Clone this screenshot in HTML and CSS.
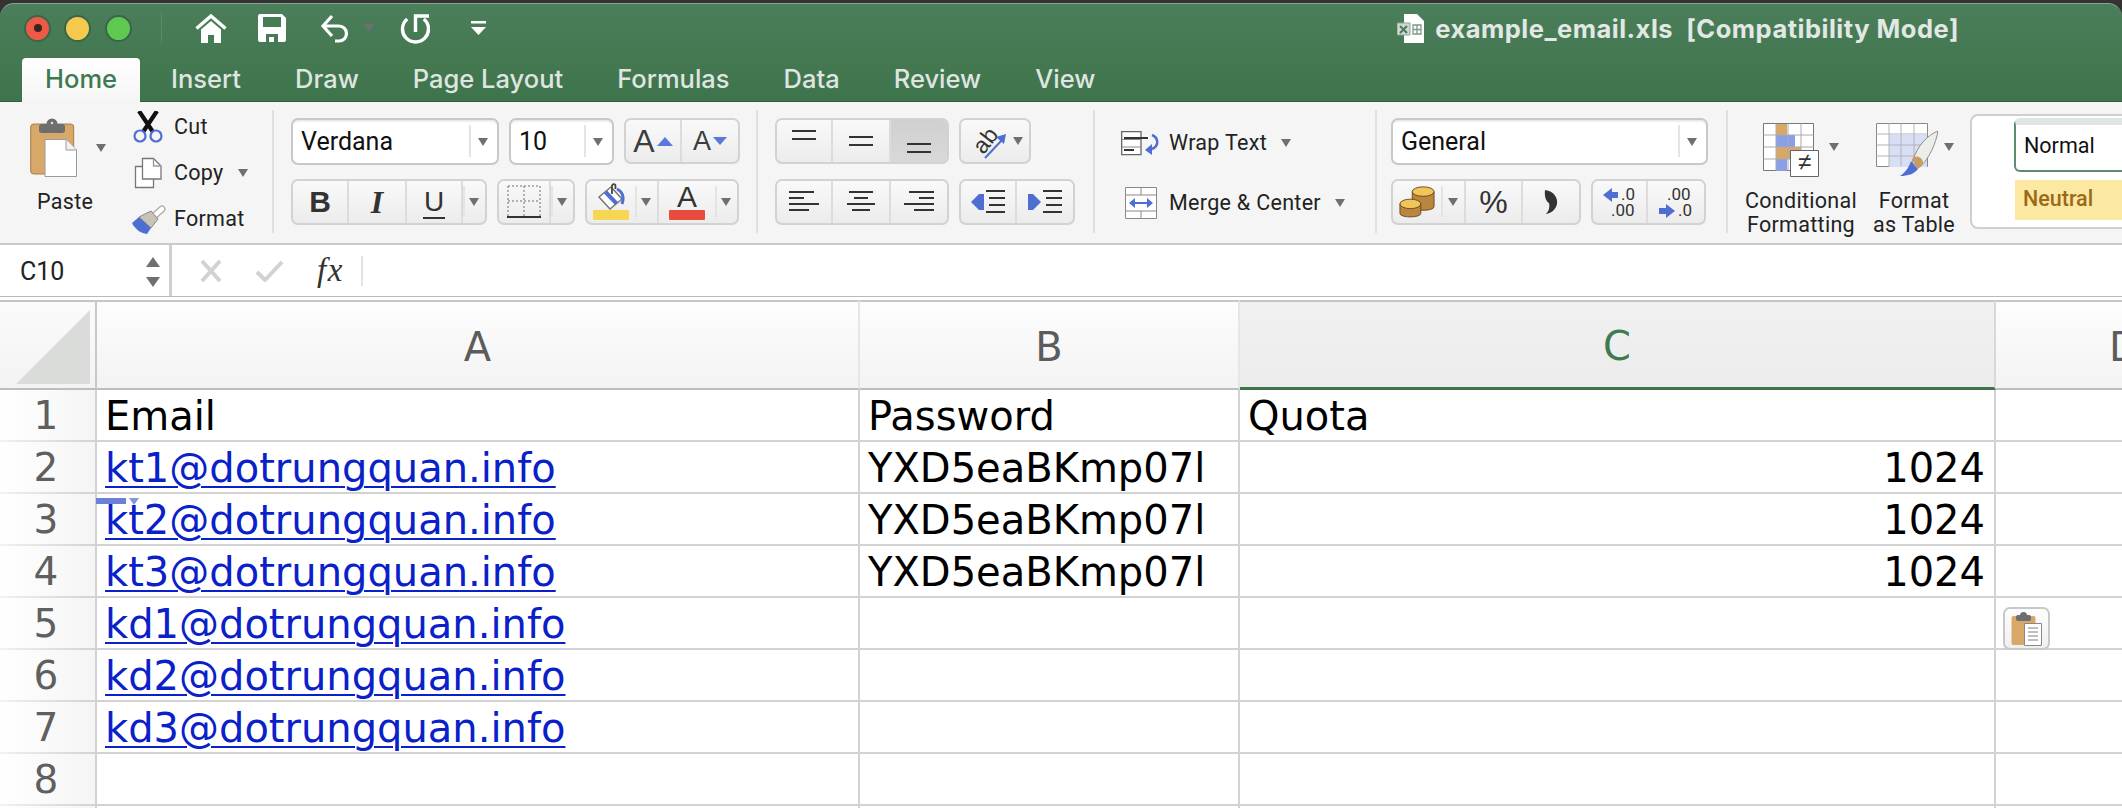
FILE: index.html
```html
<!DOCTYPE html>
<html lang="en">
<head>
<meta charset="utf-8">
<title>example_email.xls</title>
<link rel="stylesheet" href="styles.css">
</head>
<body>
<div class="window">
  <header class="titlebar">
    <div class="title-row">
      <div class="lights">
        <span class="light red"><i></i></span>
        <span class="light yellow"></span>
        <span class="light green"></span>
      </div>
      <span class="qa-sep"></span>
      <svg class="qa home" viewBox="0 0 32 29"><path d="M1.500 14.500 16 2l14.500 12.500" fill="none" stroke="#fff" stroke-width="3.400"/><path d="M6 15.500 16 7l10 8.500V29h-7v-8h-6v8H6z" fill="#fff"/></svg>
      <svg class="qa save" viewBox="0 0 28 28"><path fill="#fff" fill-rule="evenodd" d="M2 0h22l4 4v22a2 2 0 0 1-2 2H2a2 2 0 0 1-2-2V2a2 2 0 0 1 2-2zM5 3v10h18V3zM8 20v8h3v-5h5v5h4v-8z"/></svg>
      <svg class="qa undo" viewBox="0 0 30 29"><path d="M12 2 3 12l9 10M3 12h16a7.500 7.500 0 0 1 0 15h-4" fill="none" stroke="#fff" stroke-width="3.200"/></svg>
      <span class="caret qa-caret"></span>
      <svg class="qa redo" viewBox="0 0 30 31"><path d="M7.200 6A13 13 0 1 0 23.800 6M15.500 19V3H29" fill="none" stroke="#fff" stroke-width="3.400"/></svg>
      <svg class="qa more" viewBox="0 0 15 14"><path d="M0 0h15v2.500H0zM0 6h15l-7.500 8z" fill="#fff"/></svg>
      <div class="doc">
        <svg class="doc-icon" viewBox="0 0 27 29"><path d="M7 0h13l7 7v22H7z" fill="#fff"/><path d="M0 9h13v12H0z" fill="#cfd8d2" stroke="#8aa391"/><path d="m3 12 7 7m0-7-7 7" stroke="#4b7a59" stroke-width="2"/><path d="M16 11h8v9h-8zM20 11v9M16 15.500h8" fill="none" stroke="#7c9a85" stroke-width="1.300"/></svg>
        <span class="doc-title">example_email.xls  [Compatibility Mode]</span>
      </div>
    </div>
    <nav class="tabs">
      <span class="tab active">Home</span>
      <span class="tab">Insert</span>
      <span class="tab">Draw</span>
      <span class="tab">Page Layout</span>
      <span class="tab">Formulas</span>
      <span class="tab">Data</span>
      <span class="tab">Review</span>
      <span class="tab">View</span>
    </nav>
  </header>

  <section class="ribbon">
    <div class="group clip">
      <div class="paste">
        <div class="paste-top">
          <svg class="paste-icon" viewBox="0 0 47 59"><rect x=".7" y="6" width="43" height="50" rx="3" fill="#d8a868" stroke="#a87c48"/><rect x="9" y="6" width="26" height="9" rx="3" fill="#6e6e6e"/><circle cx="22" cy="6" r="5.500" fill="#6e6e6e"/><circle cx="22" cy="5" r="1.300" fill="#ddd"/><path d="M15 21.500h21L46.500 32v26.500H15z" fill="#fff" stroke="#9a9a9a"/><path d="M36 21.500V32h10.500" fill="#f2f2f2" stroke="#9a9a9a"/></svg>
          <span class="caret"></span>
        </div>
        <span class="label">Paste</span>
      </div>
      <div class="clip-list">
        <div class="clip-row">
          <svg class="clip-icon" viewBox="0 0 36 32"><path d="M9 0 23 21M27 0 13 21" stroke="#111" stroke-width="4.200" fill="none"/><circle cx="10" cy="25" r="5.500" fill="none" stroke="#4e6fd1" stroke-width="2.200"/><circle cx="26" cy="25" r="5.500" fill="none" stroke="#4e6fd1" stroke-width="2.200"/></svg>
          <span class="label">Cut</span>
        </div>
        <div class="clip-row">
          <svg class="clip-icon" viewBox="0 0 36 32"><path d="M5.500 9.500h18v21h-18z" fill="#fff" stroke="#777" stroke-width="1.300"/><path d="M12.500 1.500h11l7.500 7.500v13H12.500z" fill="#fff" stroke="#777" stroke-width="1.300"/><path d="M23.500 1.500V9H31" fill="none" stroke="#999" stroke-width="1.300"/></svg>
          <span class="label">Copy</span>
          <span class="caret copy-caret"></span>
        </div>
        <div class="clip-row">
          <svg class="clip-icon" viewBox="0 0 36 32"><path d="m24 13 8-7" stroke="#aaa" stroke-width="7" stroke-linecap="round"/><path d="m24 13 8-7" stroke="#fff" stroke-width="4.500" stroke-linecap="round"/><path d="M9 14 21 8l7 8-7 9z" fill="#c8c3b4" stroke="#888"/><path d="M2 20l7-6 12 11-4 6C10 30 5 26 2 20z" fill="#4e6fd1"/></svg>
          <span class="label">Format</span>
        </div>
      </div>
    </div>
    <span class="sep"></span>

    <div class="group font-group">
      <div class="tool-row">
        <div class="combo font-name"><span class="combo-text">Verdana</span><span class="dd"><span class="caret"></span></span></div>
        <div class="combo font-size"><span class="combo-text">10</span><span class="dd"><span class="caret"></span></span></div>
        <div class="seg">
          <span class="btn w56 grow"><span class="big-a">A</span><span class="tri-up"></span></span>
          <span class="btn w56 grow"><span class="small-a">A</span><span class="tri-down"></span></span>
        </div>
      </div>
      <div class="tool-row">
        <div class="seg">
          <span class="btn w56 bold-b">B</span>
          <span class="btn w58 ital-i">I</span>
          <span class="btn w56 under-u"><span>U</span></span>
          <span class="dd w22"><span class="caret"></span></span>
        </div>
        <div class="seg">
          <span class="btn w52 plain">
            <svg class="ic34" viewBox="0 0 34 34"><path d="M1 1h32M1 16h32M1 1v30M17 1v30M33 1v30" fill="none" stroke="#9a9a9a" stroke-width="1.500" stroke-dasharray="2 2"/><path d="M0 32h34" stroke="#333" stroke-width="2"/></svg>
          </span>
          <span class="dd w22"><span class="caret"></span></span>
        </div>
        <div class="seg">
          <span class="btn w48 noline plain colour">
            <svg class="bucket" viewBox="0 0 28 27"><path d="M2 14 14 4l11 12-12 10z" fill="#fff" stroke="#777" stroke-width="1.500"/><path d="M8.500 9 19.500 20.500" stroke="#4e6fd1" stroke-width="4"/><path d="M15 11V3c0-2.500 3.500-2.500 3.500 0v3" fill="none" stroke="#444" stroke-width="1.800"/><path d="M20 6c6 3 7 9 5 15" fill="none" stroke="#4e6fd1" stroke-width="3"/></svg>
            <i class="bar yellow-bar"></i>
          </span>
          <span class="dd w24 right-line"><span class="caret"></span></span>
          <span class="btn w56 noline plain colour"><span class="colour-a">A</span><i class="bar red-bar"></i></span>
          <span class="dd w22"><span class="caret"></span></span>
        </div>
      </div>
    </div>
    <span class="sep"></span>

    <div class="group align-group">
      <div class="tool-row">
        <div class="seg">
          <span class="btn w56 plain"><svg class="ic30" viewBox="0 0 30 30"><path d="M3 5h24M3 13h24" stroke="#333" stroke-width="2"/></svg></span>
          <span class="btn w58 plain"><svg class="ic30" viewBox="0 0 30 30"><path d="M3 11h24M3 19h24" stroke="#333" stroke-width="2"/></svg></span>
          <span class="btn w56 plain pressed"><svg class="ic30" viewBox="0 0 30 30"><path d="M3 18h24M3 26h24" stroke="#333" stroke-width="2"/></svg></span>
        </div>
        <div class="seg">
          <span class="btn orient plain">
            <svg class="ic40" viewBox="0 0 40 40"><text x="18.500" y="27" transform="rotate(-52 18.500 19.500)" class="ab">ab</text><path d="M18 37 35 19" stroke="#4e6fd1" stroke-width="2"/><path d="m29 16 10-3-2 10z" fill="#4e6fd1"/></svg>
            <span class="caret"></span>
          </span>
        </div>
      </div>
      <div class="tool-row">
        <div class="seg">
          <span class="btn w56 plain"><svg class="ic30" viewBox="0 0 30 28"><path d="M0 4h25M0 10h15M0 16h30M0 22h20" stroke="#333" stroke-width="2"/></svg></span>
          <span class="btn w58 plain"><svg class="ic30" viewBox="0 0 30 28"><path d="M3 4h24M8 10h14M1 16h28M6 22h18" stroke="#333" stroke-width="2"/></svg></span>
          <span class="btn w56 plain"><svg class="ic30" viewBox="0 0 30 28"><path d="M5 4h25M15 10h15M0 16h30M10 22h20" stroke="#333" stroke-width="2"/></svg></span>
        </div>
        <div class="seg">
          <span class="btn w56 plain"><svg class="ic34" viewBox="0 0 34 28"><path d="M0 14 8 6h5v16H8z" fill="#4e6fd1"/><path d="M15 3h19M18 10h16M18 17h16M15 24h19" stroke="#333" stroke-width="2"/></svg></span>
          <span class="btn w56 plain"><svg class="ic34" viewBox="0 0 34 28"><path d="M13 14 5 6H0v16h5z" fill="#4e6fd1"/><path d="M15 3h19M18 10h16M18 17h16M15 24h19" stroke="#333" stroke-width="2"/></svg></span>
        </div>
      </div>
    </div>
    <span class="sep"></span>

    <div class="group wrap-group">
      <div class="wrap-row">
        <svg class="wrap-icon" viewBox="0 0 39 25"><path d="M.700.700H20v23H.700z" fill="#fff" stroke="#666" stroke-width="1.300"/><path d="M.700 8.500H20M.700 16h19" stroke="#888"/><path d="M3 7h24M3 19h10" stroke="#333" stroke-width="2"/><path d="M31 4c7 3 7 11 0 14" fill="none" stroke="#4e6fd1" stroke-width="2.500"/><path d="M31 13v11l-7-5z" fill="#4e6fd1"/></svg>
        <span class="label">Wrap Text</span>
        <span class="caret"></span>
      </div>
      <div class="wrap-row">
        <svg class="wrap-icon merge" viewBox="0 0 39 32"><path d="M4.500.500h31v31h-31zM4.500 8h31M4.500 24h31M20 .500V8M20 24v7.500" fill="#fff" stroke="#888"/><path d="M9 16h22" stroke="#4e6fd1" stroke-width="2"/><path d="m14 11-6 5 6 5zM26 11l6 5-6 5z" fill="#4e6fd1"/></svg>
        <span class="label">Merge &amp; Center</span>
        <span class="caret"></span>
      </div>
    </div>
    <span class="sep"></span>

    <div class="group number-group">
      <div class="tool-row">
        <div class="combo num-format"><span class="combo-text">General</span><span class="dd"><span class="caret"></span></span></div>
      </div>
      <div class="tool-row">
        <div class="seg">
          <span class="btn w48 noline plain"><svg class="ic36" viewBox="0 0 38 34"><g fill="#b9853f" stroke="#6d4a1e"><path d="M14 6v16c0 5 23 5 23 0V6z"/><ellipse cx="25.500" cy="6" rx="11.500" ry="5" fill="#f0c65a"/><path d="M1 19v10c0 5 22 5 22 0V19z"/><ellipse cx="12" cy="19" rx="11" ry="5" fill="#f0c65a"/></g></svg></span>
          <span class="dd w25 right-line"><span class="caret"></span></span>
          <span class="btn w57 percent">%</span>
          <span class="btn w56 plain"><svg class="comma" viewBox="0 0 14 26"><path d="M1 1c9 1 13 8 12 14-1 5-5 9-11 10 3-3 4-7 3-11C3 13 0 9 1 1z" fill="#333"/></svg></span>
        </div>
        <div class="seg">
          <span class="btn w55 dec"><svg class="dec-icon" viewBox="0 0 36 38"><path d="M1 12 10 5v4h6v6h-6v4z" fill="#4e6fd1"/><text x="19" y="17" class="dec-t">.0</text><text x="9" y="33" class="dec-t">.00</text></svg></span>
          <span class="btn w56 dec"><svg class="dec-icon" viewBox="0 0 36 38"><text x="9" y="17" class="dec-t">.00</text><path d="M17 28 8 21v4H1v6h7v4z" fill="#4e6fd1"/><text x="20" y="33" class="dec-t">.0</text></svg></span>
        </div>
      </div>
    </div>
    <span class="sep"></span>

    <div class="big-btn cond">
      <div class="big-top">
        <svg class="cf-icon" viewBox="0 0 56 54"><path d="M.500.500h50v47H.500z" fill="#fff" stroke="#777"/><path d="M13 1h11v11H13z" fill="#d8a868"/><path d="M13 12h19v12H13z" fill="#8b9fe6"/><path d="M13 24h25v12H13z" fill="#d8a868"/><path d="M13 36h11v12H13z" fill="#8b9fe6"/><path d="M13 .500v47M25 .500v47M38 .500v47M.500 12h50M.500 24h50M.500 36h50" stroke="#aaa" fill="none"/><path d="M27.500 27.500h28v26h-28z" fill="#fff" stroke="#666"/><text x="41.500" y="47" class="neq">≠</text></svg>
        <span class="caret"></span>
      </div>
      <span class="label">Conditional</span>
      <span class="label">Formatting</span>
    </div>
    <div class="big-btn table-btn">
      <div class="big-top">
        <svg class="ft-icon" viewBox="0 0 62 54"><path d="M.500.500h51v43H.500z" fill="#fff" stroke="#888"/><path d="M13 12h38v32H13z" fill="#d9def7"/><path d="M13 .500v43M25 .500v43M38 .500v43M.500 11h51M.500 22h51M.500 33h51" stroke="#b5b5b5" fill="none"/><path d="M36 40C41 22 52 12 62 8c-2 12-9 28-18 36z" fill="#eceeec" stroke="#8e8e8e"/><path d="M36 36c3-5 11-2 11 4-1 3-3 5-6 6z" fill="#c99c63"/><path d="M35 38c2 3 5 6 7 8-4 5-10 7-18 7 6-4 9-9 11-15z" fill="#4e6fd1"/></svg>
        <span class="caret"></span>
      </div>
      <span class="label">Format</span>
      <span class="label">as Table</span>
    </div>
    <div class="gallery">
      <div class="style-normal"><span class="style-text">Normal</span></div>
      <div class="style-neutral">Neutral</div>
    </div>
  </section>

  <section class="formula">
    <div class="namebox">
      <span class="name-text">C10</span>
      <span class="stepper"><i class="tri-step up"></i><i class="tri-step down"></i></span>
    </div>
    <svg class="fx-x" viewBox="0 0 22 22"><path d="M2 1l18 20M20 1 2 21" stroke="#d2d2d2" stroke-width="4"/></svg>
    <svg class="fx-c" viewBox="0 0 29 22"><path d="M2 12l8 8L27 2" fill="none" stroke="#d2d2d2" stroke-width="4"/></svg>
    <span class="fx">fx</span>
    <span class="fx-sep"></span>
  </section>

  <main class="sheet-wrap">
    <div class="sheet">
      <div class="corner"><svg class="corner-tri" viewBox="0 0 74 74"><path d="M74 0v74H0z" fill="#d9dcd8"/></svg></div>
      <div class="col-head">A</div>
      <div class="col-head">B</div>
      <div class="col-head selected">C</div>
      <div class="col-head last">D</div>

      <div class="row-head">1</div><div class="cell">Email</div><div class="cell">Password</div><div class="cell">Quota</div><div class="cell"></div>
      <div class="row-head">2</div><div class="cell"><a class="link">kt1@dotrungquan.info</a></div><div class="cell">YXD5eaBKmp07l</div><div class="cell num">1024</div><div class="cell"></div>
      <div class="row-head">3</div><div class="cell"><a class="link">kt2@dotrungquan.info</a></div><div class="cell">YXD5eaBKmp07l</div><div class="cell num">1024</div><div class="cell"></div>
      <div class="row-head">4</div><div class="cell"><a class="link">kt3@dotrungquan.info</a></div><div class="cell">YXD5eaBKmp07l</div><div class="cell num">1024</div><div class="cell"></div>
      <div class="row-head">5</div><div class="cell"><a class="link">kd1@dotrungquan.info</a></div><div class="cell"></div><div class="cell"></div><div class="cell"></div>
      <div class="row-head">6</div><div class="cell"><a class="link">kd2@dotrungquan.info</a></div><div class="cell"></div><div class="cell"></div><div class="cell"></div>
      <div class="row-head">7</div><div class="cell"><a class="link">kd3@dotrungquan.info</a></div><div class="cell"></div><div class="cell"></div><div class="cell"></div>
      <div class="row-head">8</div><div class="cell"></div><div class="cell"></div><div class="cell"></div><div class="cell"></div>
      <div class="row-head"></div><div class="cell"></div><div class="cell"></div><div class="cell"></div><div class="cell"></div>
    </div>
    <div class="smart-tag"><i class="tag-bar"></i><i class="tag-tri"></i></div>
    <div class="paste-options">
      <svg class="paste-opt-icon" viewBox="0 0 32 34"><rect x=".5" y="4" width="24" height="29" rx="2" fill="#d8a868"/><rect x="5" y="3" width="15" height="6" rx="2" fill="#6e6e6e"/><circle cx="12.500" cy="3.500" r="3.500" fill="#6e6e6e"/><path d="M13.500 11.500h17v22h-17z" fill="#fff" stroke="#888"/><path d="M17 16h10M17 20h10M17 24h10M17 28h10" stroke="#aaa" stroke-width="1.500"/></svg>
    </div>
  </main>
</div>
</body>
</html>
```

FILE: styles.css
```css
* { box-sizing: border-box; }
html, body { margin: 0; padding: 0; }
body { width: 2122px; height: 808px; overflow: hidden; background: #fff; font-family: Roboto, "Liberation Sans", sans-serif; color: #222; }
.window { width: 2122px; height: 808px; overflow: hidden; padding-top: 3px; background: #333; display: flex; flex-direction: column; }

/* title bar */
.titlebar { height: 99px; flex: none; background: linear-gradient(#4b7e5a, #3e744b); border-top: 1px solid #8ba594; border-top-left-radius: 14px; border-top-right-radius: 14px; border-bottom: 1px solid #30603d; display: flex; flex-direction: column; }
.title-row { height: 53px; flex: none; display: flex; align-items: center; padding-left: 24px; padding-bottom: 5px; }
.lights { display: flex; gap: 13.300px; }
.light { width: 27px; height: 27px; border-radius: 50%; border: 2px solid #38664a; display: flex; align-items: center; justify-content: center; }
.light.red { background: #ee5a45; }
.light.red i { width: 8px; height: 8px; border-radius: 50%; background: #3a2420; }
.light.yellow { background: #f4c94e; }
.light.green { background: #5fc850; }
.qa-sep { width: 1px; height: 30px; background: #5b8a6a; margin-left: 29px; }
.qa { display: block; flex: none; }
.home { width: 32px; height: 29px; margin-left: 33px; }
.save { width: 28px; height: 28px; margin-left: 31px; }
.undo { width: 30px; height: 29px; margin-left: 34px; }
.qa-caret { margin-left: 14px; border-top-color: #cdd5cf; }
.redo { width: 30px; height: 31px; margin-left: 26px; }
.more { width: 15px; height: 14px; margin-left: 41px; }
.doc { margin-left: auto; padding-right: 163px; display: flex; align-items: center; gap: 11px; }
.doc-icon { width: 27px; height: 29px; }
.doc-title { white-space: pre; font-family: Inter, Roboto, sans-serif; font-size: 25.500px; font-weight: 700; letter-spacing: .5px; color: #e2e8e4; }
.tabs { display: flex; height: 44px; flex: none; padding: 1px 0 0 22px; align-items: stretch; }
.tab { padding: 0 27px; font-family: Inter, Roboto, sans-serif; font-size: 25.500px; font-weight: 500; line-height: 42px; color: #dfe5e1; white-space: nowrap; }
.tab.active { padding: 0 23px; margin: 0 4px -1px 0; background: linear-gradient(#fff, #f5f5f5); color: #3d7a50; border-radius: 4px 4px 0 0; }

/* ribbon */
.ribbon { height: 141px; flex: none; display: flex; background: #f5f5f5; overflow: hidden; }
.group { flex: none; }
.sep { flex: none; width: 2px; margin: 8px 0 10px; background: #e0e0e0; }
.label { font-size: 21.500px; line-height: 24px; color: #222; letter-spacing: .3px; white-space: nowrap; }
.caret { display: block; flex: none; width: 0; height: 0; border-left: 5px solid transparent; border-right: 5px solid transparent; border-top: 8px solid #6f6f6f; }

.clip { width: 272px; display: flex; padding: 2px 0 0 30px; }
.paste { width: 100px; }
.paste-top { display: flex; align-items: center; height: 73px; padding-top: 14px; gap: 19px; }
.paste-icon { width: 47px; height: 59px; flex: none; }
.paste .label { display: block; margin: 13px 0 0 7px; }
.clip-list { display: flex; flex-direction: column; }
.clip-row { height: 46px; display: flex; align-items: center; gap: 8px; }
.clip-icon { width: 36px; height: 32px; flex: none; }
.copy-caret { margin-left: 6px; }

.font-group { width: 482px; padding: 16px 0 0 17px; }
.align-group { width: 335px; padding: 16px 0 0 17px; }
.number-group { width: 349px; padding: 16px 0 0 14px; }
.tool-row { display: flex; gap: 10px; height: 47px; margin-bottom: 14px; }
.combo { display: flex; height: 47px; background: #fff; border: 2px solid #c8c8c8; border-radius: 7px; box-shadow: inset 0 3px 3px -2px #ddd; }
.combo-text { flex: 1; font-size: 25px; line-height: 44px; padding-left: 8px; color: #111; }
.font-name { width: 208px; }
.font-size { width: 105px; }
.num-format { width: 317px; }
.dd { position: relative; flex: none; width: 28px; display: flex; align-items: center; justify-content: center; }
.dd::before { content: ""; position: absolute; left: 0; top: 5px; bottom: 6px; width: 2px; background: #e4e4e4; }
.seg { display: flex; height: 46px; background: linear-gradient(#f9f9f9, #ececec); border: 2px solid #d2d2d2; border-radius: 7px; overflow: hidden; }
.btn { flex: none; display: flex; align-items: center; justify-content: center; border-right: 2px solid #dcdcdc; color: #333; }
.btn:last-child, .btn.noline { border-right: 0; }
.w48 { width: 48px; } .w52 { width: 52px; } .w55 { width: 55px; } .w56 { width: 56px; } .w57 { width: 57px; } .w58 { width: 58px; }
.w22.dd { width: 22px; } .w24.dd { width: 24px; } .w25.dd { width: 25px; }
.right-line { border-right: 2px solid #dcdcdc; }
.pressed { background: linear-gradient(#cfd1cf, #d8d8d8); }
.ic30 { width: 30px; height: 30px; display: block; }
.ic34 { width: 34px; height: 34px; display: block; }
.ic36 { width: 36px; height: 36px; display: block; flex: none; }
.ic40 { width: 40px; height: 40px; display: block; flex: none; }
.dec-icon { width: 36px; height: 38px; display: block; flex: none; }
.bucket { width: 28px; height: 27px; display: block; flex: none; }
.orient { width: 68px; gap: 6px; }
.big-a { font-family: "Liberation Sans", sans-serif; font-size: 32px; color: #3c3c3c; }
.small-a { font-family: "Liberation Sans", sans-serif; font-size: 27px; color: #3c3c3c; }
.grow { gap: 2px; }
.tri-up { width: 0; height: 0; border-left: 8px solid transparent; border-right: 8px solid transparent; border-bottom: 9px solid #5c78d8; }
.tri-down { width: 0; height: 0; border-left: 7px solid transparent; border-right: 7px solid transparent; border-top: 8px solid #5c78d8; }
.bold-b { font: 700 30px "Liberation Sans", sans-serif; color: #333; }
.ital-i { font: italic 700 32px "Liberation Serif", serif; color: #333; }
.under-u { font: 400 28px "Liberation Sans", sans-serif; color: #333; }
.under-u span { border-bottom: 2px solid #333; line-height: 31px; padding: 0 1px; }
.colour { flex-direction: column; justify-content: flex-start; padding-top: 2px; }
.bar { display: block; width: 36px; height: 10px; border-radius: 1px; margin-top: 0; }
.yellow-bar { background: #f6d653; }
.red-bar { background: #e84c40; }
.colour-a { font: 400 30px/27px "Liberation Sans", sans-serif; color: #333; }
.ab { font: 400 23px "Liberation Sans", sans-serif; fill: #333; text-anchor: middle; }
.percent { font: 400 32px "Liberation Sans", sans-serif; color: #333; }
.comma { width: 14px; height: 26px; }
.dec-t { font: 400 17px Roboto, sans-serif; fill: #333; }

.wrap-group { width: 280px; padding: 11px 0 0 26px; }
.wrap-row { height: 60px; display: flex; align-items: center; }
.wrap-icon { width: 39px; height: 25px; flex: none; margin-right: 9px; }
.wrap-icon.merge { height: 32px; }
.wrap-row .caret { margin-left: 14px; }

.big-btn { flex: none; display: flex; flex-direction: column; align-items: center; padding-top: 21px; }
.big-btn .label { text-align: center; }
.big-top { height: 66px; display: flex; align-items: flex-start; gap: 10px; }
.big-top .caret { margin-top: 20px; }
.cond { width: 114px; margin-left: 16px; }
.table-btn { width: 86px; margin-left: 13px; }
.cf-icon { width: 56px; height: 54px; display: block; }
.ft-icon { width: 62px; height: 54px; display: block; margin-left: 2px; }
.table-btn .big-top { gap: 6px; }
.neq { font: 400 24px "Liberation Sans", sans-serif; fill: #333; text-anchor: middle; }
.gallery { flex: none; width: 300px; height: 115px; margin: 12px 0 0 13px; background: #fff; border: 2px solid #cfcfcf; border-radius: 8px; padding: 2px 0 0 42px; }
.style-normal { height: 54px; border: 2px solid #5f8c70; border-radius: 6px; border-top-width: 7px; border-top-color: #dfe5e0; }
.style-text { display: block; padding-left: 8px; font-size: 21.500px; line-height: 41px; color: #111; }
.style-neutral { height: 40px; margin: 8px 0 0 1px; background: #fbe8a3; color: #9c6a16; font-size: 21.500px; line-height: 38px; padding-left: 8px; font-weight: 500; }

/* formula bar */
.formula { height: 54px; flex: none; display: flex; align-items: center; background: #fff; border-top: 2px solid #cbcbcb; border-bottom: 1px solid #b9b9b9; }
.namebox { width: 172px; height: 51px; flex: none; display: flex; align-items: center; padding: 2px 0 0 20px; border-right: 3px solid #cfcfcf; }
.name-text { flex: 1; font-size: 25px; color: #222; }
.stepper { display: flex; flex-direction: column; gap: 10px; margin-right: 9px; }
.tri-step { display: block; width: 0; height: 0; border-left: 7px solid transparent; border-right: 7px solid transparent; }
.tri-step.up { border-bottom: 10px solid #707070; }
.tri-step.down { border-top: 10px solid #707070; }
.fx-x { width: 22px; height: 22px; margin-left: 28px; flex: none; }
.fx-c { width: 29px; height: 22px; margin-left: 33px; flex: none; }
.fx { font: italic 400 33px "Liberation Serif", serif; color: #333; margin-left: 33px; letter-spacing: 1.500px; }
.fx-sep { width: 2px; height: 30px; background: #e4e4e4; margin-left: 17px; }

/* sheet */
.sheet-wrap { position: relative; flex: 1; min-height: 0; background: #fff; padding-top: 3px; overflow: hidden; }
.sheet { display: grid; grid-template-columns: 97px 763px 380px 756px 257px; grid-template-rows: 90px; grid-auto-rows: 52px; width: 2253px; font-family: "DejaVu Sans", Verdana, sans-serif; }
.corner { background: linear-gradient(#fbfbfb, #f3f3f3); border-top: 2px solid #c6c6c6; border-right: 2px solid #c8c8c8; border-bottom: 2px solid #bdbdbd; display: flex; padding: 8px 0 0 16px; }
.corner-tri { width: 74px; height: 74px; display: block; }
.col-head { display: flex; align-items: center; justify-content: center; padding-top: 3px; background: linear-gradient(#fdfdfd, #f3f3f3); border-top: 2px solid #c6c6c6; border-right: 2px solid #e6e6e6; border-bottom: 2px solid #bdbdbd; font-size: 40px; color: #5c5c5c; }
.col-head.selected { background: linear-gradient(#f1f1f1, #ececec); border-bottom: 3px solid #3c744c; color: #3f7a50; border-right-color: #d8d8d8; }
.col-head.last { border-right: 0; }
.row-head { display: flex; align-items: center; justify-content: center; background: linear-gradient(90deg, #fff, #f5f5f5); border-right: 2px solid #c8c8c8; border-bottom: 2px solid; border-image: linear-gradient(90deg, #f2f2f2, #d2d2d2) 1; font-size: 39px; color: #5f5f5f; padding-right: 3px; }
.cell { display: flex; align-items: center; padding: 1px 9px 0 8px; border-right: 2px solid #d2d2d2; border-bottom: 2px solid #d2d2d2; font-size: 40px; color: #000; white-space: nowrap; overflow: hidden; }
.cell.num { justify-content: flex-end; padding-right: 9px; }
.link { color: #0a21c9; text-decoration: underline; text-decoration-thickness: 2px; text-underline-offset: 4px; }
.smart-tag { position: absolute; left: 96px; top: 201px; display: flex; gap: 3px; }
.tag-bar { display: block; width: 30px; height: 6px; background: #6b80d8; }
.tag-tri { display: block; width: 0; height: 0; border-left: 5px solid transparent; border-right: 5px solid transparent; border-top: 7px solid #8494de; }
.paste-options { position: absolute; left: 2003px; top: 310px; width: 47px; height: 43px; background: linear-gradient(#fdfdfd, #f0f0f0); border: 2px solid #c8c8c8; border-radius: 7px; display: flex; align-items: center; justify-content: center; }
.paste-opt-icon { width: 32px; height: 34px; display: block; }
```
